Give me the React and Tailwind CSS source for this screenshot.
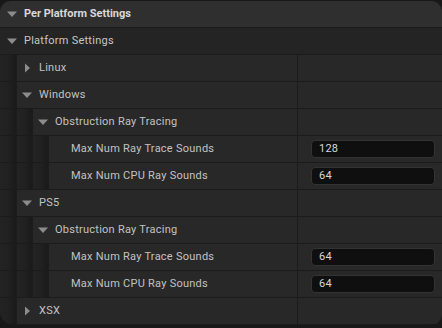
import React from 'react'

const rows = [
  { label: 'Linux', depth: 1, arrow: 'right' },
  { label: 'Windows', depth: 1, arrow: 'down' },
  { label: 'Obstruction Ray Tracing', depth: 2, arrow: 'down' },
  { label: 'Max Num Ray Trace Sounds', depth: 3, value: '128' },
  { label: 'Max Num CPU Ray Sounds', depth: 3, value: '64' },
  { label: 'PS5', depth: 1, arrow: 'down' },
  { label: 'Obstruction Ray Tracing', depth: 2, arrow: 'down' },
  { label: 'Max Num Ray Trace Sounds', depth: 3, value: '64' },
  { label: 'Max Num CPU Ray Sounds', depth: 3, value: '64' },
  { label: 'XSX', depth: 1, arrow: 'right' },
]

function Arrow({ dir }) {
  if (dir === 'right') {
    return (
      <svg width="10" height="10" viewBox="0 0 10 10" className="shrink-0">
        <path d="M3 0.5 L8 5 L3 9.5 Z" fill="#8c8c8c" />
      </svg>
    )
  }
  return (
    <svg width="10" height="10" viewBox="0 0 10 10" className="shrink-0">
      <path d="M0 2.5 L10 2.5 L5 8 Z" fill="#8c8c8c" />
    </svg>
  )
}

function Gutter({ first }) {
  return (
    <div
      className={`${first ? 'w-[17px]' : 'w-4'} shrink-0 h-full bg-linear-to-r from-[#232323] via-[#212121] to-[#1a1a1a] border-r border-[#1c1c1c]`}
    />
  )
}

function Row({ row }) {
  const gutters = Array.from({ length: row.depth })
  return (
    <div className="flex h-[27px] border-b border-[#1b1b1b]">
      {gutters.map((_, i) => (
        <Gutter key={i} first={i === 0} />
      ))}
      <div className="flex flex-1 min-w-0 bg-[#282828]">
        <div className="flex-1 min-w-0 flex items-center">
          {row.arrow ? (
            <div className="flex items-center gap-[7px] pl-[5px]">
              <Arrow dir={row.arrow} />
              <span className="text-[11px] tracking-[0.25px] text-[#c2c2c2] whitespace-nowrap">{row.label}</span>
            </div>
          ) : (
            <span className="pl-[22px] text-[11px] tracking-[0.25px] text-[#c2c2c2] whitespace-nowrap">{row.label}</span>
          )}
        </div>
        <div className="w-[145px] shrink-0 h-full border-l border-[#1b1b1b] flex items-center pl-[13px] pr-[7px]">
          {row.value && (
            <div className="w-full h-[18px] rounded-[4px] bg-[#0f0f0f] border border-[#333333] flex items-center pl-[7px] text-[11px] tracking-[0.25px] text-[#d6d6d6]">
              {row.value}
            </div>
          )}
        </div>
      </div>
    </div>
  )
}

export default function App() {
  return (
    <div className="w-[442px] h-[328px] bg-[#181818] pt-[1px] font-['Roboto',sans-serif]">
      <div className="rounded-[11px] rounded-bl-[14px] overflow-hidden">
        <div className="flex items-center gap-[7px] h-[27px] pl-[7px] bg-[#2f2f2f] border-b border-[#1b1b1b]">
          <Arrow dir="down" />
          <span className="text-[11px] font-bold text-[#d8d8d8]">Per Platform Settings</span>
        </div>
        <div className="flex items-center gap-[7px] h-[27px] pl-[7px] bg-[#242424] border-b border-[#1b1b1b]">
          <Arrow dir="down" />
          <span className="text-[11px] tracking-[0.25px] text-[#c6c6c6]">Platform Settings</span>
        </div>
        {rows.map((row, i) => (
          <Row key={i} row={row} />
        ))}
      </div>
    </div>
  )
}
